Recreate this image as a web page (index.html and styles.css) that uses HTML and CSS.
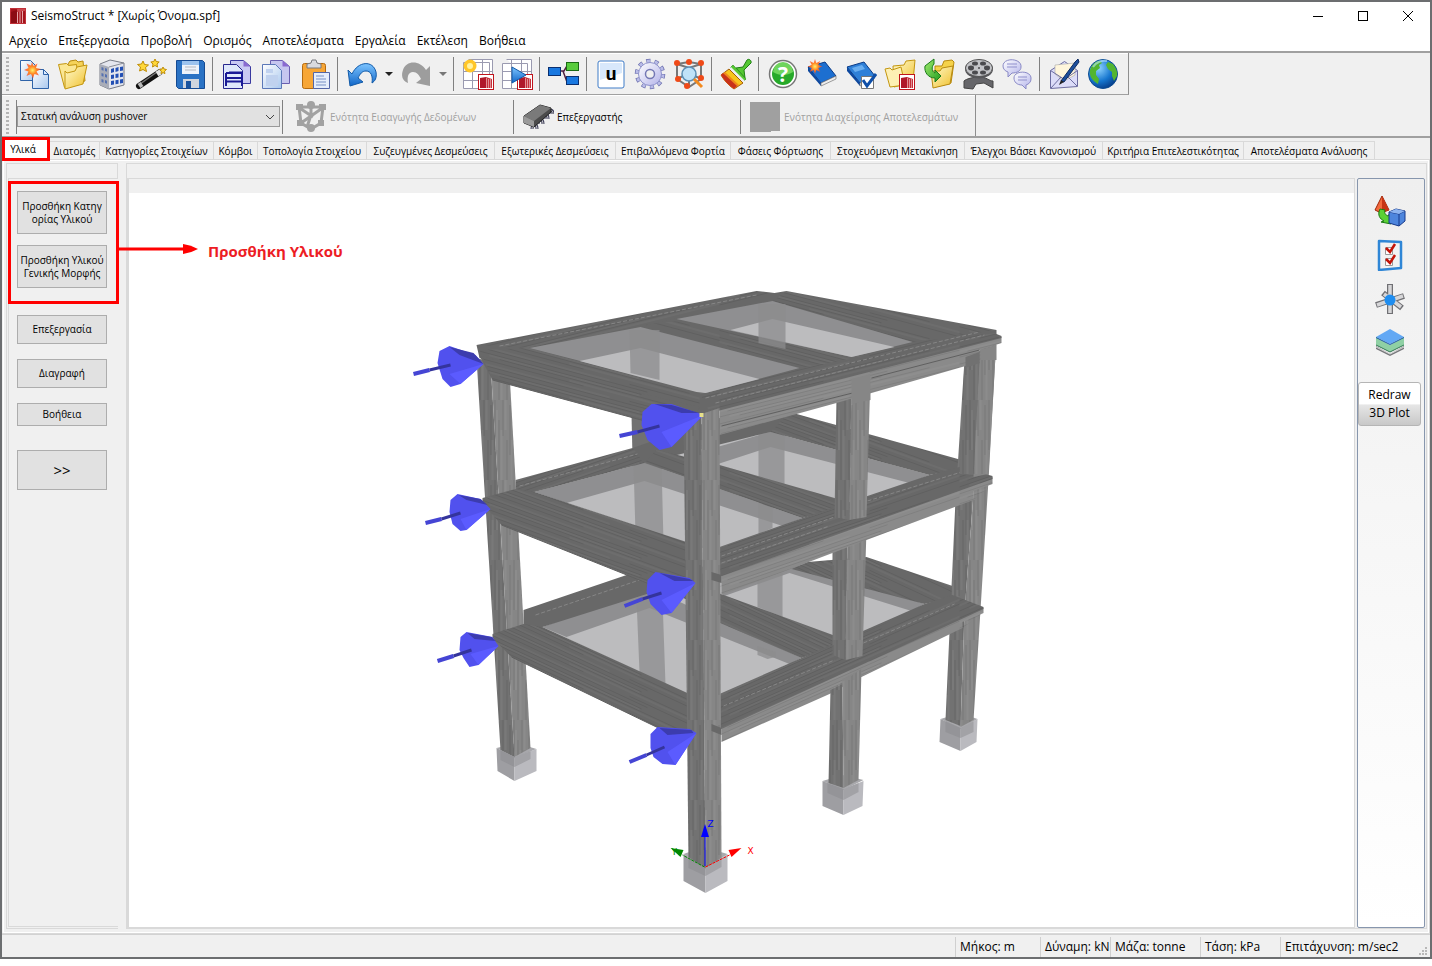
FILE: index.html
```html
<!DOCTYPE html>
<html lang="el">
<head>
<meta charset="utf-8">
<title>SeismoStruct * [Χωρίς Όνομα.spf]</title>
<link rel="stylesheet" href="styles.css">
</head>
<body>
<svg class="defs" aria-hidden="true">
  <defs>
    <linearGradient id="gPaper" x1="0" y1="0" x2="1" y2="1"><stop offset="0" stop-color="#fff"/><stop offset="1" stop-color="#a9c8ee"/></linearGradient>
    <linearGradient id="gFolder" x1="0" y1="0" x2="1" y2="1"><stop offset="0" stop-color="#fffbd0"/><stop offset="1" stop-color="#f0c02c"/></linearGradient>
    <linearGradient id="gBlue" x1="0" y1="0" x2="0" y2="1"><stop offset="0" stop-color="#7cc4ff"/><stop offset="1" stop-color="#1166c8"/></linearGradient>
    <linearGradient id="gGreen" x1="0" y1="0" x2="1" y2="1"><stop offset="0" stop-color="#a4ee70"/><stop offset="1" stop-color="#1d9a1d"/></linearGradient>
    <linearGradient id="gLilac" x1="0" y1="0" x2="1" y2="1"><stop offset="0" stop-color="#fff"/><stop offset="1" stop-color="#b3b3ea"/></linearGradient>
    <radialGradient id="gSpark"><stop offset="0" stop-color="#fff36b"/><stop offset=".45" stop-color="#ff8a26"/><stop offset="1" stop-color="#ff3c1e" stop-opacity=".75"/></radialGradient>
    <radialGradient id="gGlobe" cx=".35" cy=".3" r=".75"><stop offset="0" stop-color="#8fd4ff"/><stop offset=".6" stop-color="#1676cf"/><stop offset="1" stop-color="#063c88"/></radialGradient>
    <symbol id="logo" viewBox="0 0 16 16"><rect x=".5" y=".5" width="15" height="15" fill="#a3141c" stroke="#c03038"/><path d="M7 1h8v2l-8 1z" fill="#c9474d"/><path d="M7.500 4v11M10 3.500V15M12.500 3V15" stroke="#e9a6a9"/><path d="M1 4l6-2v13H1z" fill="#8c0c14"/></symbol>
    <symbol id="mini" viewBox="0 0 16 16"><rect x=".5" y=".5" width="15" height="15" fill="#fff" stroke="#c0141c"/><path d="M2 4l6 -1v11H2z" fill="#b0182a"/><path d="M8 3l6 2v9H8z" fill="#c4303a"/><path d="M8.500 4v10M10.500 5v9M12.500 5v9" stroke="#e8a8ac" stroke-width=".8"/></symbol>
  </defs>
</svg>

<main class="window">
  <header class="titlebar">
    <svg class="titlebar-logo"><use href="#logo"/></svg>
    <h1 class="titlebar-text">SeismoStruct * [Χωρίς Όνομα.spf]</h1>
    <button class="winbtn" aria-label="Minimize"><svg viewBox="0 0 12 12"><path d="M1 6.500h10"/></svg></button>
    <button class="winbtn" aria-label="Maximize"><svg viewBox="0 0 12 12"><rect x="1.500" y="1.500" width="9" height="9"/></svg></button>
    <button class="winbtn" aria-label="Close"><svg viewBox="0 0 12 12"><path d="M1 1l10 10M11 1L1 11"/></svg></button>
  </header>

  <nav class="menubar">
    <button>Αρχείο</button><button>Επεξεργασία</button><button>Προβολή</button><button>Ορισμός</button><button>Αποτελέσματα</button><button>Εργαλεία</button><button>Εκτέλεση</button><button>Βοήθεια</button>
  </nav>

  <section class="toolbars">
    <div class="toolbar toolbar-icons">
      <span class="grip"></span>
      <button class="tool" aria-label="New"><svg viewBox="0 0 32 32"><path d="M2.500 2.500h10l5 5v15h-15z" fill="url(#gPaper)" stroke="#2f63a8"/><path d="M14.500 11.500h11l5 5v14h-16z" fill="url(#gPaper)" stroke="#2f63a8"/><path d="M25.500 11.500v5h5z" fill="#dcebff" stroke="#2f63a8"/><path d="M14 4l1.500 4 4-2.500-1.500 4.500 5 1-4.500 2.500 2.500 4-4.500-1.500-1.500 4.500-2-4.500-4.500 2 2-4.500-4.500-1.500 4.500-2-2-4.500 4.500 2z" fill="url(#gSpark)"/></svg></button>
      <button class="tool" aria-label="Open"><svg viewBox="0 0 32 32"><path d="M11 6l2-3 6-1 2 2 5-1 2 20-14 3z" fill="#f5d35a" stroke="#b88a10"/><path d="M1.500 6.500l8-1 2 2 8-1 2 20-14 3z" fill="#fbe794" stroke="#c3960f"/><path d="M8 13l2 2 8-2 2-4 10-2-4 19-18 5z" fill="url(#gFolder)" stroke="#c3960f"/></svg></button>
      <button class="tool" aria-label="Building"><svg viewBox="0 0 32 32"><path d="M4 6l10-4 14 3v22l-15 4-9-4z" fill="#e4e6ee" stroke="#777b86"/><path d="M4 6l9 3v22l-9-4z" fill="#a9adb8"/><path d="M13 9l15-4" stroke="#8a8d96"/><path d="M15 11l3-1v4l-3 1zm4.500-1l3-1v4l-3 1zm4.500-1l3-.5v4l-3 .5zM15 17l3-.5v4l-3 .5zm4.500-1l3-.5v4l-3 .5zm4.500-.7l3-.5v4l-3 .5zM15 23l3-.5v4l-3 .5zm4.500-.8l3-.5v4l-3 .5zm4.500-.8l3-.5v4l-3 .5z" fill="#2350b4"/><path d="M5.500 9l2 .7v3l-2-.7zm3.500 1l2 .7v3l-2-.7zM5.500 15l2 .7v3l-2-.7zm3.500 1l2 .7v3l-2-.7zM5.500 21l2 .7v3l-2-.7zM9 22l2 .7v3L9 25z" fill="#5571b0"/></svg></button>
      <button class="tool" aria-label="Wizard"><svg viewBox="0 0 32 32"><path d="M4 28l21-14" stroke="#111" stroke-width="6" stroke-linecap="round"/><path d="M5 26l17-12" stroke="#777" stroke-width="1.500"/><path d="M22 16l5-3" stroke="#e4e4e4" stroke-width="5.500"/><path d="M4 28l3-2" stroke="#bbb" stroke-width="5"/><path d="M8 3l1.500 3.500 4 .5-3 2.500 1 4L8 11.500 4.500 13l1-4-3-2.500 4-.5zM20 1l1.200 2.500 3 .5-2.200 2 .5 3L20 7.500 17.500 9l.5-3-2.200-2 3-.5zM28 9l1 2 2.500.5-2 1.700.4 2.500L28 14.500l-2 1.200.4-2.500-2-1.700L27 11z" fill="#ffd83a" stroke="#bf8d06"/></svg></button>
      <button class="tool" aria-label="Save"><svg viewBox="0 0 32 32"><path d="M2.500 2.500h26l2 2v26h-26l-2-2z" fill="#2a72c4" stroke="#154a92"/><path d="M8 3h17v13H8z" fill="#eef3fa"/><path d="M8 3h17v4H8z" fill="#9cc3ee"/><path d="M11 9h11M11 12h11" stroke="#b5b9c0"/><path d="M9 21h16v9H9z" fill="#cfd5de"/><path d="M12 23h5v7h-5z" fill="#19539f"/></svg></button>
      <span class="sep"></span>
      <button class="tool" aria-label="Copy table"><svg viewBox="0 0 32 32"><path d="M9.500 2.500h13l7 6v17h-20z" fill="#c9c9f3" stroke="#3a3aa0"/><path d="M22.500 2.500v6h7z" fill="#8a6ad0"/><path d="M2.500 6.500h13l6 6v18h-19z" fill="#dfe8fb" stroke="#28288e"/><path d="M5 28v-13M8 14.500h14M21 15v13M5 15h16M5 20h16M5 23.500h16" stroke="#1a1a96" stroke-width="2" fill="none"/></svg></button>
      <button class="tool" aria-label="Copy"><svg viewBox="0 0 32 32"><path d="M10.500 2.500h12l7 6v17h-19z" fill="#c6c6ef" stroke="#6a5fb0"/><path d="M22.500 2.500v6h7z" fill="#8a6ad0"/><path d="M2.500 6.500h13l6 6v18h-19z" fill="url(#gPaper)" stroke="#5b78b8"/><path d="M6 11h7v4H6zM6 17h12v11H6z" fill="#c0d2ef"/></svg></button>
      <button class="tool" aria-label="Paste"><svg viewBox="0 0 32 32"><rect x="3.500" y="5.500" width="23" height="25" rx="2" fill="#f7a636" stroke="#b46a10"/><path d="M8 10V6l4-1 1-3h4l1 3 4 1v4z" fill="#d9dade" stroke="#77797f"/><path d="M14.500 14.500h16v16h-16z" fill="#e5edfb" stroke="#5366a8"/><path d="M17 18h8M17 21h10M17 24h10M17 27h10" stroke="#9aaed8" stroke-width="1.500"/></svg></button>
      <span class="sep"></span>
      <button class="tool" aria-label="Undo"><svg viewBox="0 0 32 32"><path d="M2 12l4 4C12 3 27 2 30 14c1 6-1 9-4 11 1-7-1-12-6-12-4 0-6 3-8 7l5 4L4 28z" fill="url(#gBlue)" stroke="#125aa8"/></svg></button>
      <button class="drop" aria-label="Undo list"><svg viewBox="0 0 8 4"><path d="M0 0h8L4 4z" fill="#222"/></svg></button>
      <button class="tool" aria-label="Redo"><svg viewBox="0 0 32 32"><path d="M30 8v20l-14-3 5-4c-2-4-4-7-8-7-5 0-6 5-5 11-6-2-7-8-5-13C6 2 20 2 26 12z" fill="#9d9d9d"/></svg></button>
      <button class="drop" aria-label="Redo list"><svg viewBox="0 0 8 4"><path d="M0 0h8L4 4z" fill="#777"/></svg></button>
      <span class="sep"></span>
      <button class="tool" aria-label="New table"><svg viewBox="0 0 32 32"><path d="M1.500 4.500h26v26h-26zM6.500 1.500h24v18M1.500 13.500h29M1.500 22.500h29M10.500 1.500v29M20.500 1.500v29" fill="#fff" stroke="#9a9ab0"/><circle cx="8" cy="8" r="6.500" fill="#ffc628"/><circle cx="8" cy="8" r="3" fill="#fff2a0"/><use href="#mini" x="16" y="16" width="16" height="16"/></svg></button>
      <button class="tool" aria-label="Run table"><svg viewBox="0 0 32 32"><path d="M1.500 5.500h25v25h-25zM5.500 1.500h25v20M1.500 13.500h29M1.500 22.500h29M10.500 1.500v29M20.500 1.500v29" fill="#fff" stroke="#9a9ab0"/><use href="#mini" x="16" y="16" width="16" height="16"/><path d="M11 9l14 8-14 8z" fill="url(#gBlue)" stroke="#125aa8"/></svg></button>
      <span class="sep"></span>
      <button class="tool" aria-label="Tree"><svg viewBox="0 0 32 32"><path d="M12 13h4l3-5M15 13l4 11" stroke="#502040" stroke-width="1.500" fill="none"/><rect x=".5" y="9.500" width="12" height="8" fill="#1978e0" stroke="#0a2f70"/><rect x="18.500" y="4.500" width="12" height="8" fill="#58cc3c" stroke="#1a6b14"/><rect x="18.500" y="18.500" width="12" height="8" fill="#1978e0" stroke="#0a2f70"/></svg></button>
      <span class="sep"></span>
      <button class="tool" aria-label="Units"><svg viewBox="0 0 32 32"><rect x="3" y="3" width="26" height="27" rx="2" fill="#fff" stroke="#3f7cc8"/><path d="M5 5h22v10L5 22z" fill="#d8e8fb"/><text x="16" y="22" class="glyph-u">u</text></svg></button>
      <button class="tool" aria-label="Settings"><svg viewBox="0 0 32 32"><circle cx="16" cy="16" r="13" fill="none" stroke="#6b6fae" stroke-width="4.500" stroke-dasharray="4.100 4.070"/><circle cx="16" cy="16" r="13" fill="none" stroke="#b9bce8" stroke-width="3" stroke-dasharray="3.100 5.070" stroke-dashoffset="-.5"/><circle cx="16" cy="16" r="11.500" fill="url(#gLilac)" stroke="#8f93cc"/><circle cx="16" cy="16" r="4.500" fill="#f0f0f0" stroke="#7478b4" stroke-width="1.500"/></svg></button>
      <button class="tool" aria-label="Model view"><svg viewBox="0 0 32 32"><path d="M4 6l12-2 12 2v15l-12 8-12-8zM4 6l12 4 12-4M16 10v18M4 21l12-6 12 6" fill="none" stroke="#777" stroke-width="2"/><circle cx="16" cy="16" r="7" fill="#bfe2f8" stroke="#5b8fb5" stroke-width="1.500"/><path d="M21 21l8 8" stroke="#f28a1e" stroke-width="3"/><g fill="#f04a18"><circle cx="4" cy="5" r="3"/><circle cx="16" cy="4" r="3"/><circle cx="28" cy="5" r="3"/><circle cx="5" cy="21" r="3"/><circle cx="28" cy="20" r="3"/><circle cx="14" cy="28" r="3"/></g></svg></button>
      <span class="sep"></span>
      <button class="tool" aria-label="Brush"><svg viewBox="0 0 32 32"><path d="M16 10l7-1 4-7c2-2 5 1 4 3l-7 7 1 8z" fill="#55c832" stroke="#1f7d14"/><path d="M13 7l13 14-3 3L10 10z" fill="#55c832" stroke="#2f8f20" stroke-width=".7"/><path d="M11 9l14 14-2 2L9 11z" fill="#eee"/><path d="M9 11l14 14-9 6C8 27 4 22 1 17z" fill="#f7c51c" stroke="#a45d08"/><path d="M5 14l14 13-5 4C8 27 4 22 1 17z" fill="#f08a1a"/><path d="M3 15l14 13-3 3C8 27 4 22 1 17z" fill="#c8321a"/></svg></button>
      <span class="sep"></span>
      <button class="tool" aria-label="Help"><svg viewBox="0 0 32 32"><circle cx="16" cy="16" r="13.500" fill="#fff" stroke="#777" stroke-width="1.500"/><circle cx="16" cy="16" r="11" fill="#27a92a"/><path d="M6 14a10 10 0 0 1 20 0c-6 4-14 4-20 0z" fill="#6fd45c"/><text x="16" y="24" class="glyph-q">?</text></svg></button>
      <button class="tool" aria-label="Manual"><svg viewBox="0 0 32 32"><path d="M2 9l17-5 11 14-15 7z" fill="#1d6fd0" stroke="#0a3a86"/><path d="M2 9l13 16v3L2 13z" fill="#0c479e"/><path d="M15 25l15-7v3l-15 7z" fill="#eee" stroke="#777" stroke-width=".7"/><path d="M9 1l1.300 4 4-2-2 4 4 1.500-4 1.500 2 4-4-2L9 16l-1.300-4-4 2 2-4-4-1.500 4-1.500-2-4 4 2z" fill="url(#gSpark)"/></svg></button>
      <button class="tool" aria-label="Verification"><svg viewBox="0 0 32 32"><path d="M2 9l17-5 11 14-15 7z" fill="#2f80d8" stroke="#0a3a86"/><path d="M7 10l10-3 3 4-10 3z" fill="#69aef0"/><path d="M2 9l13 16v3L2 13z" fill="#0c479e"/><path d="M15 25l14-7v3l-14 7z" fill="#eee" stroke="#777" stroke-width=".7"/><path d="M16.500 18.500h12v12h-12z" fill="#fff" stroke="#777"/><path d="M18 22l4 6 9-12" stroke="#0f4fa8" stroke-width="3" fill="none"/></svg></button>
      <button class="tool" aria-label="Examples"><svg viewBox="0 0 32 32"><path d="M9 8l11-1 2-4 9-1-2 22-19 5z" fill="url(#gFolder)" stroke="#c3960f"/><path d="M1 11l5-1 2 2 9-3 4 18-15 2z" fill="#fdf0b4" stroke="#c3960f"/><use href="#mini" x="15" y="16" width="16" height="16"/></svg></button>
      <button class="tool" aria-label="Export folder"><svg viewBox="0 0 32 32"><path d="M12 8l7 0 2-5 8-1 2 2-3 21-16 4z" fill="#f5d24a" stroke="#b88a10"/><path d="M8 13l9 0 2-3 11-2-3 18-17 4z" fill="url(#gFolder)" stroke="#b88a10"/><path d="M11 1v5c-3 3-2 8 1 9v-3l6 6-6 6v-4C5 20 1 14 2 8z" fill="url(#gGreen)" stroke="#1a7a1a"/></svg></button>
      <button class="tool" aria-label="Videos"><svg viewBox="0 0 32 32"><path d="M17 19c-6 0-13 2-15 4l0 7 9 1 3-5 8-1 9 5v-7c-4 0-6-4-14-4z" fill="#66666a" stroke="#444"/><ellipse cx="17" cy="11" rx="14" ry="9.500" fill="#56565a"/><ellipse cx="17" cy="10" rx="13.500" ry="8.500" fill="#c3c4c8" stroke="#555"/><g fill="#4a4a4e"><ellipse cx="9" cy="10" rx="3" ry="2.400"/><ellipse cx="13" cy="5.500" rx="3" ry="2"/><ellipse cx="21" cy="5.500" rx="3" ry="2"/><ellipse cx="25" cy="10" rx="3" ry="2.400"/><ellipse cx="21" cy="14.500" rx="3" ry="2"/><ellipse cx="13" cy="14.500" rx="3" ry="2"/><circle cx="17" cy="10" r="1"/></g></svg></button>
      <button class="tool" aria-label="Forum"><svg viewBox="0 0 32 32"><path d="M2 8c0-9 19-8 18 1 0 4-4 6-9 6l-4 4v-5C4 13 2 11 2 8z" fill="url(#gLilac)" stroke="#8a8ac6"/><path d="M13 20c0-8 18-8 17 1 0 3-2 5-5 6v4l-4-4c-5 0-8-3-8-7z" fill="url(#gLilac)" stroke="#8a8ac6"/><path d="M6 6h10M6 9h10M17 19h9M17 22h9" stroke="#9090cc"/></svg></button>
      <span class="sep"></span>
      <button class="tool" aria-label="Mail"><svg viewBox="0 0 32 32"><path d="M2.500 12.500l14-9 13 9v16l-27 2z" fill="#dcdcf8" stroke="#6c6ca0"/><path d="M7 7l20-2v12l-11 6-9-7z" fill="#fff6dc" stroke="#aaa" stroke-width=".6"/><path d="M2.500 12.500l14 9 13-9M3 30l10-11M29 28l-9-9" fill="none" stroke="#6c6ca0"/><path d="M13 23L27 4l3-3 1 3L16 24z" fill="#1d4f9c" stroke="#0c2a60"/><path d="M11 27l2-5 3 2z" fill="#222"/></svg></button>
      <button class="tool" aria-label="Web"><svg viewBox="0 0 32 32"><circle cx="16" cy="16" r="14.500" fill="url(#gGlobe)" stroke="#0d4c92"/><path d="M3 12C5 6 9 3 13 3l2 2-3 2 1 3-4 3 0 4 3 4-1 5c-5-3-9-7-8-14zM21 4l5 2c3 4 5 8 4 12l-3 5-2-5 0-4-4-3-2-4z" fill="#52b531"/><path d="M6 9c3-5 9-7 14-6" stroke="#bfe9ff" stroke-width="2" fill="none" opacity=".6"/></svg></button>
    </div>

    <div class="toolbar toolbar-modules">
      <span class="grip"></span>
      <div class="combo-wrap">
        <select class="combo" aria-label="Τύπος ανάλυσης"><option>Στατική ανάλυση pushover</option></select>
        <svg class="combo-arrow" viewBox="0 0 10 6"><path d="M1 1l4 4 4-4"/></svg>
      </div>
      <button class="module module-pre" disabled><svg viewBox="0 0 32 32"><path d="M4 6h24l-2 16-10 6-10-6zM16 4v10M6 22L26 8M6 8l12 8M12 26l4-12" fill="none" stroke="#a2a2a2" stroke-width="3"/><g fill="#a2a2a2"><path d="M1 3h7v6H1zM24 3h7v6h-7zM2 19h7v6H2zM23 19h6v6h-6z"/><circle cx="16" cy="4" r="4"/><circle cx="16" cy="27" r="4"/></g></svg>Ενότητα Εισαγωγής Δεδομένων</button>
      <button class="module module-proc"><svg viewBox="0 0 32 32"><path d="M10 28c0-6 5-6 5 0m1-5c0-6 5-6 5 0m1-5c0-6 4-6 4 0m1-5c0-5 4-5 4 0" fill="none" stroke="#3c3c58" stroke-width="3"/><path d="M10 28c0-6 5-6 5 0m1-5c0-6 5-6 5 0m1-5c0-6 4-6 4 0m1-5c0-5 4-5 4 0" fill="none" stroke="#d0d0d0"/><path d="M2 15L18 4l11 3v4L12 26 2 22z" fill="#4b4b4b" stroke="#222"/><path d="M2 15L18 4l11 3-17 13z" fill="#7a7a7a"/><path d="M2 15l10 5v6L2 22z" fill="#9a9a9a"/></svg>Επεξεργαστής</button>
      <button class="module module-post" disabled><svg viewBox="0 0 32 32"><path d="M1 1h30v29h-9v1H1z" fill="#a0a0a0"/></svg>Ενότητα Διαχείρισης Αποτελεσμάτων</button>
    </div>
  </section>

  <div class="tabs" role="tablist">
    <button role="tab" aria-selected="true" class="tab tab-active">Υλικά</button><button role="tab" class="tab">Διατομές</button><button role="tab" class="tab">Κατηγορίες Στοιχείων</button><button role="tab" class="tab">Κόμβοι</button><button role="tab" class="tab">Τοπολογία Στοιχείου</button><button role="tab" class="tab">Συζευγμένες Δεσμεύσεις</button><button role="tab" class="tab">Εξωτερικές Δεσμεύσεις</button><button role="tab" class="tab">Επιβαλλόμενα Φορτία</button><button role="tab" class="tab">Φάσεις Φόρτωσης</button><button role="tab" class="tab">Στοχευόμενη Μετακίνηση</button><button role="tab" class="tab">Έλεγχοι Βάσει Κανονισμού</button><button role="tab" class="tab">Κριτήρια Επιτελεστικότητας</button><button role="tab" class="tab">Αποτελέσματα Ανάλυσης</button>
  </div>

  <section class="page">
    <aside class="side">
      <div class="side-head"></div>
      <div class="side-body">
        <div class="marked">
          <button class="cmd cmd-tall">Προσθήκη Κατηγ<br>ορίας Υλικού</button>
          <button class="cmd cmd-tall">Προσθήκη Υλικού<br>Γενικής Μορφής</button>
          <svg class="callout-arrow" viewBox="0 0 82 12"><path d="M0 6h70" stroke="#f00" stroke-width="3"/><path d="M67 1q8 1 15 5-7 4-15 5z" fill="#f00"/></svg>
          <strong class="callout-text">Προσθήκη Υλικού</strong>
        </div>
        <button class="cmd">Επεξεργασία</button>
        <button class="cmd">Διαγραφή</button>
        <button class="cmd cmd-short">Βοήθεια</button>
        <button class="cmd cmd-more">&gt;&gt;</button>
      </div>
    </aside>

    <div class="view">
      <div class="view-head"></div>
      <div class="view-row">
        <div class="canvas">
          <svg class="scene" viewBox="130 193 1224 734" role="img" aria-label="3D model">
            <defs>
              <pattern id="grain" width="240" height="17" patternUnits="userSpaceOnUse"><path d="M0 1.500h162M20 4.500h190M0 8.500h104M150 11.500h90M8 14.500h160" stroke="#000" opacity=".08"/><path d="M10 3h150M90 7h150M0 13h130" stroke="#fff" opacity=".07"/></pattern>
              <pattern id="gLT" href="#grain" patternTransform="skewY(15)"/>
              <pattern id="gLM" href="#grain" patternTransform="skewY(20)"/>
              <pattern id="gLB" href="#grain" patternTransform="skewY(25)"/>
              <pattern id="gRT" href="#grain" patternTransform="skewY(-14)"/>
              <pattern id="gRM" href="#grain" patternTransform="skewY(-19)"/>
              <pattern id="gRB" href="#grain" patternTransform="skewY(-24)"/>
              <pattern id="gV" width="19" height="80" patternUnits="userSpaceOnUse"><path d="M1.500 0v50M5.500 20v60M9.500 0v36M13.500 40v40M16.500 5v50" stroke="#000" opacity=".1"/><path d="M3.500 10v40M8 30v50M12 0v30M18 40v40" stroke="#fff" opacity=".1"/></pattern>
            </defs>

            <!-- bottom storey: slabs, rear members -->
            <path class="slab" d="M543 627L650 588 720 560 780 553 925 604 860 636 802 658 705 702z"/>
            <path class="inner" d="M543 627L650 588 802 658 790 664 650 608 567 637zM735 575L792 563 925 604 912 611 790 573 722 597z"/>
            <path class="ghost" d="M636 575L662 570 666 685 640 672zM758 560h25v57l-25-10zM758 646l18 6v5l-8 2-10-4z"/>
            <path class="top" d="M524 610L633 573 660 565 660 590 543 627 524 633z"/>
            <path class="dash" d="M536 615L640 580"/>
            <path class="top" d="M808 562L867 557 956 587 956 597 925 604 792 569z"/>
            <path class="top" d="M716 592L836 636 836 646 802 658 716 621z"/>
            <path fill="url(#gLB)" d="M716 592L836 636 836 646 802 658 716 621zM808 562L867 557 956 587 956 597 925 604 792 569z"/>

            <!-- middle storey: slabs, rear members -->
            <path class="slab" d="M535 492L645 463 720 443 771 432 930 475 850 504 803 518 715 552z"/>
            <path class="inner" d="M535 492L645 463 803 518 783 526 645 481 567 503zM700 452L771 432 930 475 910 483 771 447 700 470z"/>
            <path class="ghost" d="M634 463h28l2 80-28-9zM759 432h26v56l-26-8zM759 500l14 4v24l-14 6z"/>
            <path class="mid" d="M632 415h25v45l-24-3z"/>
            <path class="top" d="M516 480L633 448 720 418 790 412 962 460 962 469 930 475 771 432 645 463 535 492 516 498z"/>
            <path class="top" d="M657 450L720 465 842 500 842 508 803 518 645 463z"/>
            <path fill="url(#gLM)" d="M657 450L720 465 842 500 842 508 803 518 645 463zM790 412L962 460 962 469 930 475 771 432z"/>
            <path fill="url(#gRM)" d="M516 480L633 448 645 463 535 492 516 498z"/>
            <path class="dash" d="M520 486L638 454"/>

            <!-- footing tops -->
            <path class="foot-top" d="M497 748l20-5 20 6-22 9zM823 781l20-6 21 5-20 10zM941 719l20-6 17 6-17 10zM684 854l20-7 24 7-22 15z"/>

            <!-- left column -->
            <path class="colL" d="M477 358L491 362 515 757 501 750z"/>
            <path class="colR" d="M491 362L510 372 531 748 515 757z"/>
            <path fill="url(#gV)" d="M477 358L510 372 531 748 515 757 501 750z"/>

            <!-- right column -->
            <path class="colL" d="M965 360L981 350 975 480 965 612 961 726 946 720 956 500z"/>
            <path class="colR" d="M981 345L997 338 989 480 981 610 974 720 961 727 965 612 975 480z"/>
            <path fill="url(#gV)" d="M965 360L997 338 989 480 981 610 974 720 961 727 946 720 956 500z"/>

            <!-- bottom storey: front beams -->
            <path class="side-l" d="M722 728L984 608V613L963 622V628L862 677 830 694 722 742z"/>
            <path class="top" d="M720 694L802 658 925 604 953 595 984 607 984 609 722 729 712 724z"/>
            <path fill="url(#gRB)" d="M720 694L953 595 984 607 984 613 963 628 722 742 712 724z"/>
            <path class="dash" d="M724 706L835 660M864 643L955 604"/>
            <path class="top" d="M493 634L524 624 543 627 690 694V743L512 657 493 638z"/>
            <path fill="url(#gLB)" d="M493 634L524 624 543 627 690 694V743L512 657 493 638z"/>
            <path class="edge" d="M512 657L690 743"/>

            <!-- middle column, lower part -->
            <path class="colL" d="M831 690L843 684 844 788 829 783zM833 550L848 544 846 660 833 655z"/>
            <path class="colR" d="M843 679L862 669 859 780 844 788zM848 536L867 530 863 656 846 660z"/>
            <path fill="url(#gV)" d="M831 690L862 669 859 780 844 788 829 783zM833 550L867 530 863 656 846 660 833 655z"/>

            <!-- middle storey: front beams -->
            <path class="side-l" d="M722 574L993 477V484L974 491V500L867 540 833 553 722 595z"/>
            <path class="top" d="M720 547L803 518 930 475 960 467 993 476V479L722 576 712 572z"/>
            <path fill="url(#gRM)" d="M720 547L960 467 993 476V484L974 500 722 595 712 572z"/>
            <path class="dash" d="M722 556L838 516M868 501L962 472M722 563L830 526"/>
            <path class="top" d="M483 498L516 489 535 492 690 543V600L502 525 483 503z"/>
            <path fill="url(#gLM)" d="M483 498L516 489 535 492 690 543V600L502 525 483 503z"/>
            <path class="edge" d="M502 525L690 600"/>

            <!-- middle and right columns, upper part -->
            <path class="colL" d="M837 398L852 384 850 520 835 517zM965 362L981 352 974 475 960 474z"/>
            <path class="colR" d="M852 377L871 372 867 517 850 520zM981 345L997 338 989 474 974 477z"/>
            <path fill="url(#gV)" d="M837 398L871 372 867 517 850 520 835 517zM965 362L997 338 989 474 960 474z"/>

            <!-- roof -->
            <path class="side-l" d="M720 404L1002 337V343L980 350V362L872 393 837 403 720 435z"/>
            <path class="top" d="M477 345L757 291 775 293 787 291 997 330V334L1002 336V338L722 410 700 416 480 358z"/>
            <path class="top" d="M480 356L700 407 690 433 493 380z"/>
            <path fill="url(#gRT)" d="M477 345L757 291 775 293 640 327 530 348zM700 393L913 342 997 333 1002 343 980 362 722 434z"/>
            <path fill="url(#gLT)" d="M480 350L530 348 700 393 700 407 690 433 493 380zM640 325L690 320 863 357 800 368zM787 291L997 330 913 342 773 301z"/>
            <path class="inner" d="M530 348L641 327 800 368 706 393zM677 319L773 301 913 342 852 357z"/>
            <path class="slab" d="M580 361L641 348 760 379 706 393 697 392zM731 330L773 319 895 347 852 357z"/>
            <path class="ghost" d="M630 330h30v50l-29-7zM759 304h27v45l-27-6z"/>
            <path class="edge" d="M493 380L690 433M722 426L853 393M872 378L980 350"/>
            <path class="dash" d="M500 346L757 295M706 398L980 332M716 403L985 335"/>
            <path class="mid" d="M966 368L980 363V352L966 357z"/>
            <path class="colR" d="M852 379L871 374V400L852 404zM981 350L997 345V360H981z"/>

            <!-- front column -->
            <path class="colL" d="M684 408L702 414 706 868 689 860z"/>
            <path class="colR" d="M702 414L720 408 722 860 706 868z"/>
            <path fill="url(#gV)" d="M684 408L702 414 720 408 722 860 706 868 689 860z"/>
            <path class="top" d="M712 572l10 3v8l-10-3zM712 724l10 4v7l-10-4z"/>

            <!-- footings -->
            <g class="foot">
              <path d="M497 748L515 757V781L498 771zM823 781L844 789V815L823 806zM941 719L961 728V751L940 742zM684 854L706 868V893L684 881z"/>
              <path class="foot-r" d="M537 749L515 757V781L537 771zM864 781L844 789V815L863 806zM978 719L961 728V751L977 742zM728 854L706 868V893L728 881z"/>
              <path class="foot-s" d="M501 750l14 7v10l-14-7zM531 751l-16 6v10l16-8zM828 783l16 6v11l-16-7zM859 783l-15 6v11l15-8zM946 721l15 7v10l-15-6zM974 721l-13 7v10l13-6zM689 858l17 10v8l-17-8zM722 858l-16 10v8l16-9z"/>
            </g>

            <!-- lateral loads -->
            <g class="load">
              <path d="M438 363L440 351 450 346 476 355 484 364 461 384 451 387 443 379zM642 425L643 412 652 404 672 404 704 415 672 447 660 450 648 440zM450 512L451 500 458 494 481 499 491 509 467 530 461 531 453 524zM647 592L648 580 656 572 690 578 696 583 672 613 662 615 651 604zM460 650L461 637 467 632 493 637 499 646 479 665 470 667 464 658zM651 748L651 734 658 727 690 729 697 733 676 765 663 764 654 757z"/>
              <path class="load-dark" d="M450 347L474 353 484 364 460 355zM655 404L672 405 700 413 682 413zM459 495L481 499 488 505 467 500zM660 573L690 579 694 581 675 581zM468 633L492 637 496 641 475 639zM660 728L692 730 694 733 668 735z"/>
              <path class="load-light" d="M484 364L450 374 461 384zM704 415L662 432 672 447zM491 509L461 519 467 530zM696 583L662 600 672 613zM499 646L471 654 479 665zM697 733L668 752 676 765z"/>
              <path class="shaft" d="M414 374L430 370M620 436L638 432M426 523L442 519M625 606L643 599M438 661L454 656M630 762L647 755"/>
              <path class="shaft shaft-far" d="M430 370L451 365M638 432L660 426M442 519L461 513M643 599L662 593M454 656L472 650M647 755L665 747"/>
            </g>
            <path d="M700 413h4v4h-4z" fill="#e6e08a"/>

            <!-- axes -->
            <path d="M705.500 866V836" stroke="#00f"/><path d="M705.500 824l4 13h-8z" fill="#00f"/>
            <path d="M706 867l24-12" stroke="#f00" stroke-dasharray="3 1"/><path d="M742 848l-13 2 3 7z" fill="#f00"/>
            <path d="M705 867l-22-12" stroke="#080" stroke-dasharray="3 1"/><path d="M671 848l13 2-3 7z" fill="#080"/>
            <text x="708" y="827" class="axis" fill="#00f">Z</text><text x="748" y="854" class="axis" fill="#f00">X</text><text x="672" y="855" class="axis" fill="#080">Y</text>
          </svg>
        </div>
        <div class="plotbar">
          <button class="plot-icon" aria-label="Display layout"><svg viewBox="0 0 32 32"><path d="M8 1l7 14-8 3-6-3z" fill="#f2693c" stroke="#9c2408"/><path d="M8 1l7 14-7 2z" fill="#c83414"/><path d="M6 14c-3 6 0 10 4 12l-3 1 10 2-1-11-2 3c-3-1-4-4-3-6z" fill="#5bd135" stroke="#1b7c12"/><path d="M15 17l7-3 9 2v10l-6 5-10-3z" fill="#4d85dd" stroke="#17398a"/><path d="M15 17l10 2 6-3M25 19v12" stroke="#17398a" fill="none"/><path d="M15 17l7-3 9 2-6 3z" fill="#8db4f0"/></svg></button>
          <button class="plot-icon" aria-label="Plot options"><svg viewBox="0 0 32 32"><path d="M5 2l22 1v26L5 31z" fill="#f2f2f2" stroke="#2f86d6" stroke-width="2.500" stroke-linejoin="round"/><path d="M11.500 8.500h7v7h-7zM11.500 19.500h7v7h-7z" fill="#fff" stroke="#999"/><path d="M12 9l4 4 5-8M12 20l4 4 5-8" fill="none" stroke="#c41408" stroke-width="2.500"/></svg></button>
          <button class="plot-icon" aria-label="Axes"><svg viewBox="0 0 32 32"><path d="M16 1v30M9 10l19 15M2 22l28-9" stroke="#707074" stroke-width="6"/><path d="M16 2v28M10 11l17 13M3 22l26-9" stroke="#d6d6d8" stroke-width="3.500"/><circle cx="16" cy="17" r="5.500" fill="#1e8df0"/></svg></button>
          <button class="plot-icon" aria-label="Layers"><svg viewBox="0 0 32 32"><path d="M2 19l14 8 14-8v3l-14 7-14-7z" fill="#77777b"/><path d="M2 20l14 7 14-7" fill="none" stroke="#d8d8d8"/><path d="M2 10l14 8 14-8v8l-14 7-14-7z" fill="#8fd0a4"/><path d="M2 18l14 7 14-7" fill="none" stroke="#2f7650"/><path d="M2 10l14-8 14 8-14 7z" fill="#62a8f4"/><path d="M2 10l14 7 14-7v1l-14 7-14-7z" fill="#1c56a4"/></svg></button>
          <button class="redraw">Redraw<br>3D Plot</button>
        </div>
      </div>
    </div>
  </section>

  <footer class="statusbar">
    <span class="cell cell-a">Μήκος: m</span><span class="cell cell-b">Δύναμη: kN</span><span class="cell cell-c">Μάζα: tonne</span><span class="cell cell-d">Τάση: kPa</span><span class="cell cell-e">Επιτάχυνση: m/sec2</span>
    <svg class="sizegrip" viewBox="0 0 9 9"><path d="M6 0h2v2H6zM3 3h2v2H3zM6 3h2v2H6zM0 6h2v2H0zM3 6h2v2H3zM6 6h2v2H6z"/></svg>
  </footer>
</main>
</body>
</html>
```
FILE: styles.css
```css
* { box-sizing: border-box; }
body { margin: 0; background: #fff; color: #000; font: 12px/16px "Open Sans", "Noto Sans", sans-serif; }
button, select { font: inherit; color: inherit; margin: 0; }
button { border: 0; background: none; padding: 0; }
.defs { position: absolute; width: 0; height: 0; }

.window { display: flex; flex-direction: column; height: calc(100vh - 7px); background: #f0f0f0; border: 2px solid #6c6e70; }

.titlebar { display: flex; align-items: center; height: 28px; background: #fff; }
.titlebar-logo { width: 16px; height: 16px; margin: 0 5px 0 8px; }
.titlebar-text { flex: 1; margin: 0; font-size: 12px; font-weight: 400; }
.winbtn { display: flex; width: 45px; height: 28px; align-items: center; justify-content: center; }
.winbtn svg { width: 12px; height: 12px; fill: none; stroke: #000; }

.menubar { display: flex; gap: 11px; padding: 0 7px; height: 21px; background: #fff; align-items: center; }

.toolbars { border-top: 2px solid #a0a0a0; border-bottom: 2px solid #a0a0a0; height: 87px; }
.toolbar { display: flex; align-items: center; width: max-content; height: 42px; border-right: 1px solid #8f8f8f; border-bottom: 1px solid #a0a0a0; box-shadow: inset 0 1px #fff; padding: 0 6px 0 4px; }
.toolbar-modules { height: 41px; border-bottom: 0; padding: 2px 0 0 4px; }
.grip { width: 3px; height: 34px; margin-right: 5px; background: repeating-linear-gradient(#b4b4b4 0 2px, #f0f0f0 2px 4px); }
.tool { width: 39px; height: 36px; display: flex; align-items: center; justify-content: center; }
.tool svg { width: 32px; height: 32px; }
.drop { width: 15px; height: 36px; display: flex; align-items: center; justify-content: center; }
.drop svg { width: 8px; height: 4px; }
.sep { width: 8px; height: 34px; padding-left: 3px; }
.sep::before { content: ""; display: block; width: 1px; height: 100%; background: #808080; }
.glyph-u { font: 700 19px Roboto, sans-serif; text-anchor: middle; }
.glyph-q { font: 700 21px "Open Sans", sans-serif; text-anchor: middle; fill: #fff; }

.combo-wrap { position: relative; margin-left: 2px; width: 264px; border-left: 1px solid #808080; height: 34px; padding: 6px 0; }
.combo { appearance: none; display: block; width: 100%; height: 21px; border: 1px solid #999; border-radius: 0; background: #e1e1e1; padding: 0 3px; font-size: 10px; line-height: 19px; }
.combo-arrow { position: absolute; right: 5px; top: 14px; width: 10px; height: 6px; fill: none; stroke: #444; pointer-events: none; }
.module { display: flex; align-items: center; gap: 3px; height: 34px; margin-left: 2px; border-left: 1px solid #808080; font-size: 10px; text-align: left; white-space: nowrap; }
.module svg { width: 32px; height: 32px; flex: none; }
.module:disabled { color: #a0a0a0; }
.module-pre { width: 229px; padding-left: 12px; }
.module-proc { width: 225px; padding-left: 8px; }
.module-post { width: 235px; padding-left: 8px; }

.tabs { display: grid; grid-template-columns: 48px 50px 114px 44px 109px 128px 121px 115px 100px 134px 138px 141px 131px; padding-top: 3px; height: 21px; background: #f0f0f0; }
.tab { height: 18px; border: 1px solid #d9d9d9; border-left: 0; border-bottom: 0; font-size: 10px; line-height: 16px; white-space: nowrap; }
.tab-active { position: relative; height: 24px; margin-top: -4px; padding: 0 6px 0 0; background: #fff; border: 3px solid #f00; }

.page { flex: 1; min-height: 0; display: flex; gap: 8px; padding: 3px 2px 4px 4px; background: #f0f0f0; border: 1px solid #d9d9d9; border-left: 0; outline: 1px solid #fff; outline-offset: -2px; }
.side { width: 112px; flex: none; display: flex; flex-direction: column; border: 1px solid #d9d9d9; border-right: 0; padding: 0 0 1px 1px; }
.side-head { height: 15px; border-right: 1px solid #d9d9d9; border-bottom: 1px solid #d9d9d9; }
.side-body { flex: 1; display: flex; flex-direction: column; align-items: flex-start; gap: 15px; border-left: 1px solid #d9d9d9; border-bottom: 1px solid #d9d9d9; padding: 2px 0 0; }
.marked { position: relative; width: 111px; height: 123px; border: 3px solid #f00; display: flex; flex-direction: column; gap: 11px; padding: 7px 0 0 6px; margin: 0 0 -4px -1px; flex: none; }
.cmd { width: 90px; height: 29px; flex: none; margin-left: 8px; background: #e1e1e1; border: 1px solid #adadad; font-size: 10px; line-height: 13px; white-space: nowrap; display: block; text-align: center; }
.cmd-tall { height: 43px; margin-left: 0; }
.cmd-short { height: 23px; }
.cmd-more { height: 40px; margin-top: 9px; font-size: 15px; }
.callout-arrow { position: absolute; left: 105px; top: 59px; width: 82px; height: 12px; z-index: 2; }
.callout-text { position: absolute; left: 197px; top: 55px; font-size: 15px; line-height: 24px; color: #ed1c24; white-space: nowrap; z-index: 2; }

.view { flex: 1; min-width: 0; display: flex; flex-direction: column; border: 1px solid #d9d9d9; padding-right: 1px; }
.view-head { height: 14px; flex: none; }
.view-row { flex: 1; min-height: 0; display: flex; gap: 2px; }
.canvas { flex: 1; min-width: 0; border: 1px solid #d9d9d9; border-left-width: 2px; padding-top: 14px; }
.scene { display: block; width: 100%; height: 100%; background: #fff; }
.plotbar { width: 68px; flex: none; display: flex; flex-direction: column; align-items: center; gap: 12px; padding: 16px 3px 0 0; border: 1px solid #8796ad; border-radius: 2px; background: linear-gradient(#efefef, #fff); }
.plot-icon { width: 32px; height: 32px; }
.plot-icon svg { width: 32px; height: 32px; display: block; }
.redraw { width: 63px; height: 44px; margin-top: 11px; border: 1px solid #b5b5b5; border-radius: 3px; background: linear-gradient(#fff 50%, #e6e6e6 52%, #c8c8c8); font-size: 12px; line-height: 18px; }

.statusbar { display: flex; justify-content: flex-end; height: 23px; flex: none; padding-top: 2px; border-top: 1px solid #d2d2d2; position: relative; }
.cell { border-left: 1px solid #d0d0d0; padding-left: 4px; line-height: 20px; white-space: nowrap; }
.cell-a { width: 85px; }
.cell-b { width: 70px; }
.cell-c { width: 90px; }
.cell-d { width: 80px; }
.cell-e { width: 150px; }
.sizegrip { position: absolute; right: 2px; bottom: 1px; width: 9px; height: 9px; fill: #b8b8b8; }

.top { fill: #686868; }
.side-l { fill: #8a8a8a; }
.mid { fill: #717171; }
.colL { fill: #727272; }
.colR { fill: #868686; }
.slab { fill: #bcbcbe; }
.inner { fill: #8f8f91; }
.ghost { fill: #8c8c8e; opacity: .75; }
.edge { fill: none; stroke: #606060; }
.dash { fill: none; stroke: #868686; stroke-dasharray: 4 2; }
.foot { fill: #9e9ea2; }
.foot-top { fill: #a8a8ac; }
.foot-r { fill: #bababf; }
.foot-s { fill: #8a8a8e; opacity: .5; }
.load { fill: #5151ee; }
.load-dark { fill: #3c3cae; }
.load-light { fill: #5b5bff; }
.shaft { stroke: #4545d4; stroke-width: 4; fill: none; }
.shaft-far { stroke: #34349c; stroke-width: 3; }
.axis { font: 9px "DejaVu Sans", sans-serif; }
```
